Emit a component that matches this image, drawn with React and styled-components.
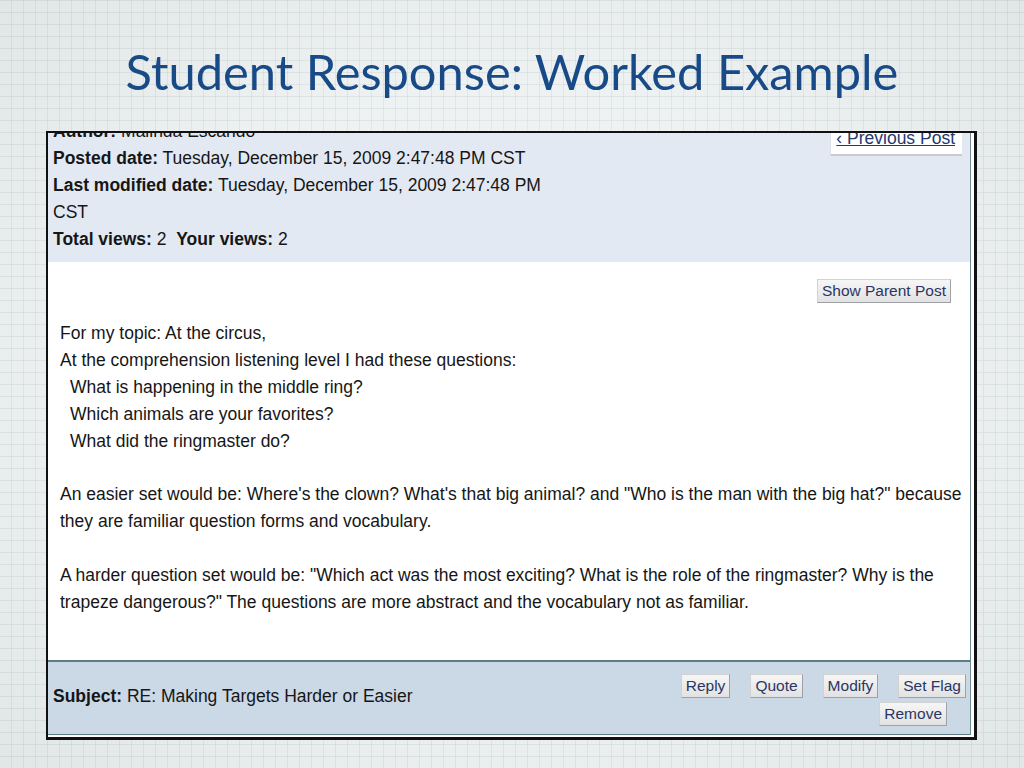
import React from "react";
import styled, { createGlobalStyle } from "styled-components";

const Global = createGlobalStyle`
  html, body { margin: 0; padding: 0; }
  body {
    width: 1024px;
    height: 768px;
    overflow: hidden;
    background-color: #e9eded;
    background-image:
      radial-gradient(ellipse at center, rgba(255,255,255,0.55) 0%, rgba(255,255,255,0.25) 55%, rgba(200,208,208,0.25) 100%),
      repeating-linear-gradient(90deg, transparent 0, transparent 11px, rgba(175,190,190,0.35) 11px, rgba(175,190,190,0.35) 12px),
      repeating-linear-gradient(0deg, transparent 0, transparent 11px, rgba(175,190,190,0.35) 11px, rgba(175,190,190,0.35) 12px);
  }
`;

const Slide = styled.div`
  width: 1024px;
  height: 768px;
  padding-top: 42px;
  box-sizing: border-box;
`;

const Title = styled.h1`
  margin: 0;
  font-family: Lato, "Open Sans", sans-serif;
  font-weight: 400;
  font-size: 48.8px;
  line-height: 58px;
  color: #174a87;
  text-align: center;
`;

const Frame = styled.div`
  margin: 31px 0 0 46px;
  width: 931px;
  box-sizing: border-box;
  border: 2px solid #111;
  border-right-width: 3px;
  border-bottom-width: 3px;
  padding: 0 3px 2px 0;
  background: #ffffff;
`;

const Panel = styled.div`
  height: 602px;
  display: flex;
  flex-direction: column;
  overflow: hidden;
  border-right: 1px solid #6f8a8f;
  font-family: "Liberation Sans", Arial, sans-serif;
  font-size: 17.5px;
  color: #161616;
`;

const Header = styled.div`
  height: 129px;
  flex: none;
  box-sizing: border-box;
  background: #e3e9f3;
  display: flex;
  justify-content: space-between;
  align-items: flex-start;
  padding: 0 8px 0 5px;
`;

const Meta = styled.div`
  margin-top: -15px;
  line-height: 27px;
`;

const Line = styled.div`
  white-space: nowrap;
`;

const Label = styled.b`
  font-weight: 700;
`;

const PrevBox = styled.div`
  margin-top: -9px;
  background: #ffffff;
  padding: 0 7px 2px 5px;
  border-bottom: 2px solid #c9ccd2;
  border-left: 1px solid #dde0e5;
  line-height: 28px;
`;

const PrevLink = styled.a`
  color: #24386e;
  text-decoration: underline;
  white-space: nowrap;
`;

const Body = styled.div`
  flex: 1;
  min-height: 0;
  overflow: hidden;
  background: #ffffff;
  padding: 17px 0 0 12px;
  display: flex;
  flex-direction: column;
`;

const ParentRow = styled.div`
  display: flex;
  justify-content: flex-end;
  margin: 0 19px 17px 0;
`;

const Btn = styled.span`
  display: inline-flex;
  align-items: center;
  justify-content: center;
  box-sizing: border-box;
  height: 24px;
  padding: 0 4px;
  font-size: 15.5px;
  color: #2b3563;
  background: linear-gradient(#f6f6f6, #e2e2e2);
  border: 1px solid #d2d2d2;
  border-right-color: #9ea2a8;
  border-bottom-color: #9ea2a8;
  white-space: nowrap;
  margin-right: ${(p) => p.$mr || 0}px;
`;

const Text = styled.div`
  line-height: 26.9px;
`;

const Para = styled.p`
  margin: 0 0 26.9px;
`;

const Indent = styled.div`
  padding-left: ${(p) => p.$indent || 0}px;
`;

const Footer = styled.div`
  flex: none;
  height: 75px;
  box-sizing: border-box;
  background: #cbd8e6;
  border-top: 2px solid #5d7d84;
  border-bottom: 1px solid #5d7d84;
  display: flex;
  justify-content: space-between;
  align-items: flex-start;
  padding: 0 4px 0 5px;
`;

const Subject = styled.div`
  margin-top: 21px;
  line-height: 27px;
  white-space: nowrap;
`;

const Buttons = styled.div`
  width: 292px;
  margin-top: 12px;
  display: flex;
  flex-wrap: wrap;
  justify-content: flex-end;
  column-gap: 20px;
  row-gap: 4px;
`;

export default function App() {
  return (
    <>
      <Global />
      <Slide>
        <Title>Student Response: Worked Example</Title>
        <Frame>
          <Panel>
            <Header>
              <Meta>
                <Line><Label>Author:</Label> Malinda Escando</Line>
                <Line><Label>Posted date:</Label> Tuesday, December 15, 2009 2:47:48 PM CST</Line>
                <Line><Label>Last modified date:</Label> Tuesday, December 15, 2009 2:47:48 PM</Line>
                <Line>CST</Line>
                <Line><Label>Total views:</Label> 2&nbsp; <Label>Your views:</Label> 2</Line>
              </Meta>
              <PrevBox>
                <PrevLink>‹ Previous Post</PrevLink>
              </PrevBox>
            </Header>
            <Body>
              <ParentRow>
                <Btn>Show Parent Post</Btn>
              </ParentRow>
              <Text>
                <Para>
                  For my topic: At the circus,
                  <br />
                  At the comprehension listening level I had these questions:
                  <Indent $indent={10}>What is happening in the middle ring?</Indent>
                  <Indent $indent={10}>Which animals are your favorites?</Indent>
                  <Indent $indent={10}>What did the ringmaster do?</Indent>
                </Para>
                <Para>
                  An easier set would be: Where's the clown? What's that big animal? and "Who is the man with the big hat?" because they are familiar question forms and vocabulary.
                </Para>
                <Para>
                  A harder question set would be: "Which act was the most exciting? What is the role of the ringmaster? Why is the trapeze dangerous?" The questions are more abstract and the vocabulary not as familiar.
                </Para>
              </Text>
            </Body>
            <Footer>
              <Subject><Label>Subject:</Label> RE: Making Targets Harder or Easier</Subject>
              <Buttons>
                <Btn>Reply</Btn>
                <Btn>Quote</Btn>
                <Btn>Modify</Btn>
                <Btn>Set Flag</Btn>
                <Btn $mr={19}>Remove</Btn>
              </Buttons>
            </Footer>
          </Panel>
        </Frame>
      </Slide>
    </>
  );
}
